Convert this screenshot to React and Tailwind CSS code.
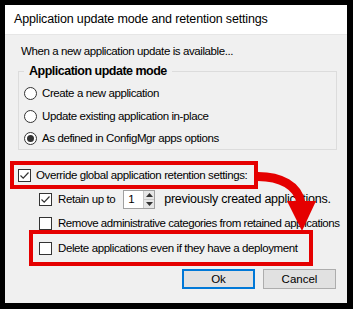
import React from "react";

const font = { fontFamily: '"Liberation Sans", Arial, sans-serif' };

function Check({ checked }) {
  return (
    <div className="w-[13px] h-[13px] border border-[#333333] bg-white flex items-center justify-center shrink-0">
      {checked && (
        <svg width="11" height="11" viewBox="0 0 11 11">
          <path d="M1.5 5.5 L4.2 8.2 L9.5 2.5" fill="none" stroke="#333333" strokeWidth="1.2" />
        </svg>
      )}
    </div>
  );
}

function Radio({ selected }) {
  return (
    <div className="w-[13px] h-[13px] rounded-full border border-[#333333] bg-white flex items-center justify-center shrink-0">
      {selected && <div className="w-[7px] h-[7px] rounded-full bg-[#333333]" />}
    </div>
  );
}

export default function App() {
  return (
    <div className="relative w-[353px] h-[309px] bg-black pt-[5px] pl-[5px] pr-[6px] pb-[6px] text-black whitespace-nowrap" style={font}>
      <div className="flex flex-col h-full bg-[#f0f0f0]">
        <div className="h-[30px] shrink-0 bg-white flex items-center pl-[9px] text-[12.5px] tracking-[-0.15px] border-b border-[#e6e6e6]">
          Application update mode and retention settings
        </div>
        <div className="flex-1 flex flex-col text-[11.5px] leading-[15px] tracking-[-0.4px]">
          <div className="pl-[16px] pt-[9px]">When a new application update is available...</div>
          <fieldset className="ml-[13px] mr-[10px] mt-[5px] border border-[#dcdcdc] h-[86px] px-[5px] pt-[4px]">
            <legend className="ml-[0px] px-[5px] font-bold text-[12.5px] tracking-[-0.5px]">Application update mode</legend>
            <div className="flex flex-col gap-[7.5px] pt-[3px]">
              <div className="flex items-center gap-[5px]"><Radio /><span>Create a new application</span></div>
              <div className="flex items-center gap-[5px]"><Radio /><span>Update existing application in-place</span></div>
              <div className="flex items-center gap-[5px]"><Radio selected /><span>As defined in ConfigMgr apps options</span></div>
            </div>
          </fieldset>
          <div className="ml-[5px] mt-[11px] w-[248px] h-[28px] shrink-0 border-4 border-[#e50000] flex items-center pl-[4px] gap-[5px]">
            <Check checked />
            <span>Override global application retention settings:</span>
          </div>
          <div className="ml-[34px] h-[20px] shrink-0 flex items-center">
            <Check checked />
            <span className="ml-[6px]">Retain up to</span>
            <div className="ml-[8px] w-[32px] h-[19px] border border-[#a0a0a0] bg-white flex">
              <div className="flex-1 pl-[4px] flex items-center">1</div>
              <div className="w-[11px] flex flex-col border-l border-[#c8c8c8]">
                <div className="flex-1 bg-[#e6e6e6] border-b border-[#c8c8c8] flex items-center justify-center">
                  <svg width="7" height="4" viewBox="0 0 7 4"><path d="M0 4 L3.5 0 L7 4 Z" fill="#333" /></svg>
                </div>
                <div className="flex-1 bg-[#e6e6e6] flex items-center justify-center">
                  <svg width="7" height="4" viewBox="0 0 7 4"><path d="M0 0 L3.5 4 L7 0 Z" fill="#333" /></svg>
                </div>
              </div>
            </div>
            <span className="ml-[9px] text-[12.5px] tracking-[-0.25px]">previously created applications.</span>
          </div>
          <div className="ml-[34px] mt-[8px] h-[13px] shrink-0 flex items-center">
            <Check />
            <span className="ml-[6px] tracking-[-0.45px]">Remove administrative categories from retained applications</span>
          </div>
          <div className="ml-[24px] w-[284px] h-[36px] shrink-0 border-4 border-[#e50000] flex items-center pl-[6px]">
            <Check />
            <span className="ml-[6px]">Delete applications even if they have a deployment</span>
          </div>
          <div className="flex justify-end gap-[8px] pr-[11px] mt-[3px] tracking-normal">
            <div className="w-[73px] h-[20px] border-2 border-[#0078d7] bg-[#e1e1e1] flex items-center justify-center">Ok</div>
            <div className="w-[73px] h-[20px] border border-[#adadad] bg-[#e1e1e1] flex items-center justify-center">Cancel</div>
          </div>
        </div>
      </div>
      <svg className="absolute inset-0 pointer-events-none" width="353" height="309" viewBox="0 0 353 309">
        <path d="M256 176.5 C281 176 298 186 301 203" fill="none" stroke="#e50000" strokeWidth="9" />
        <path d="M287 201 L316 201 L302 231 Z" fill="#e50000" />
      </svg>
    </div>
  );
}
